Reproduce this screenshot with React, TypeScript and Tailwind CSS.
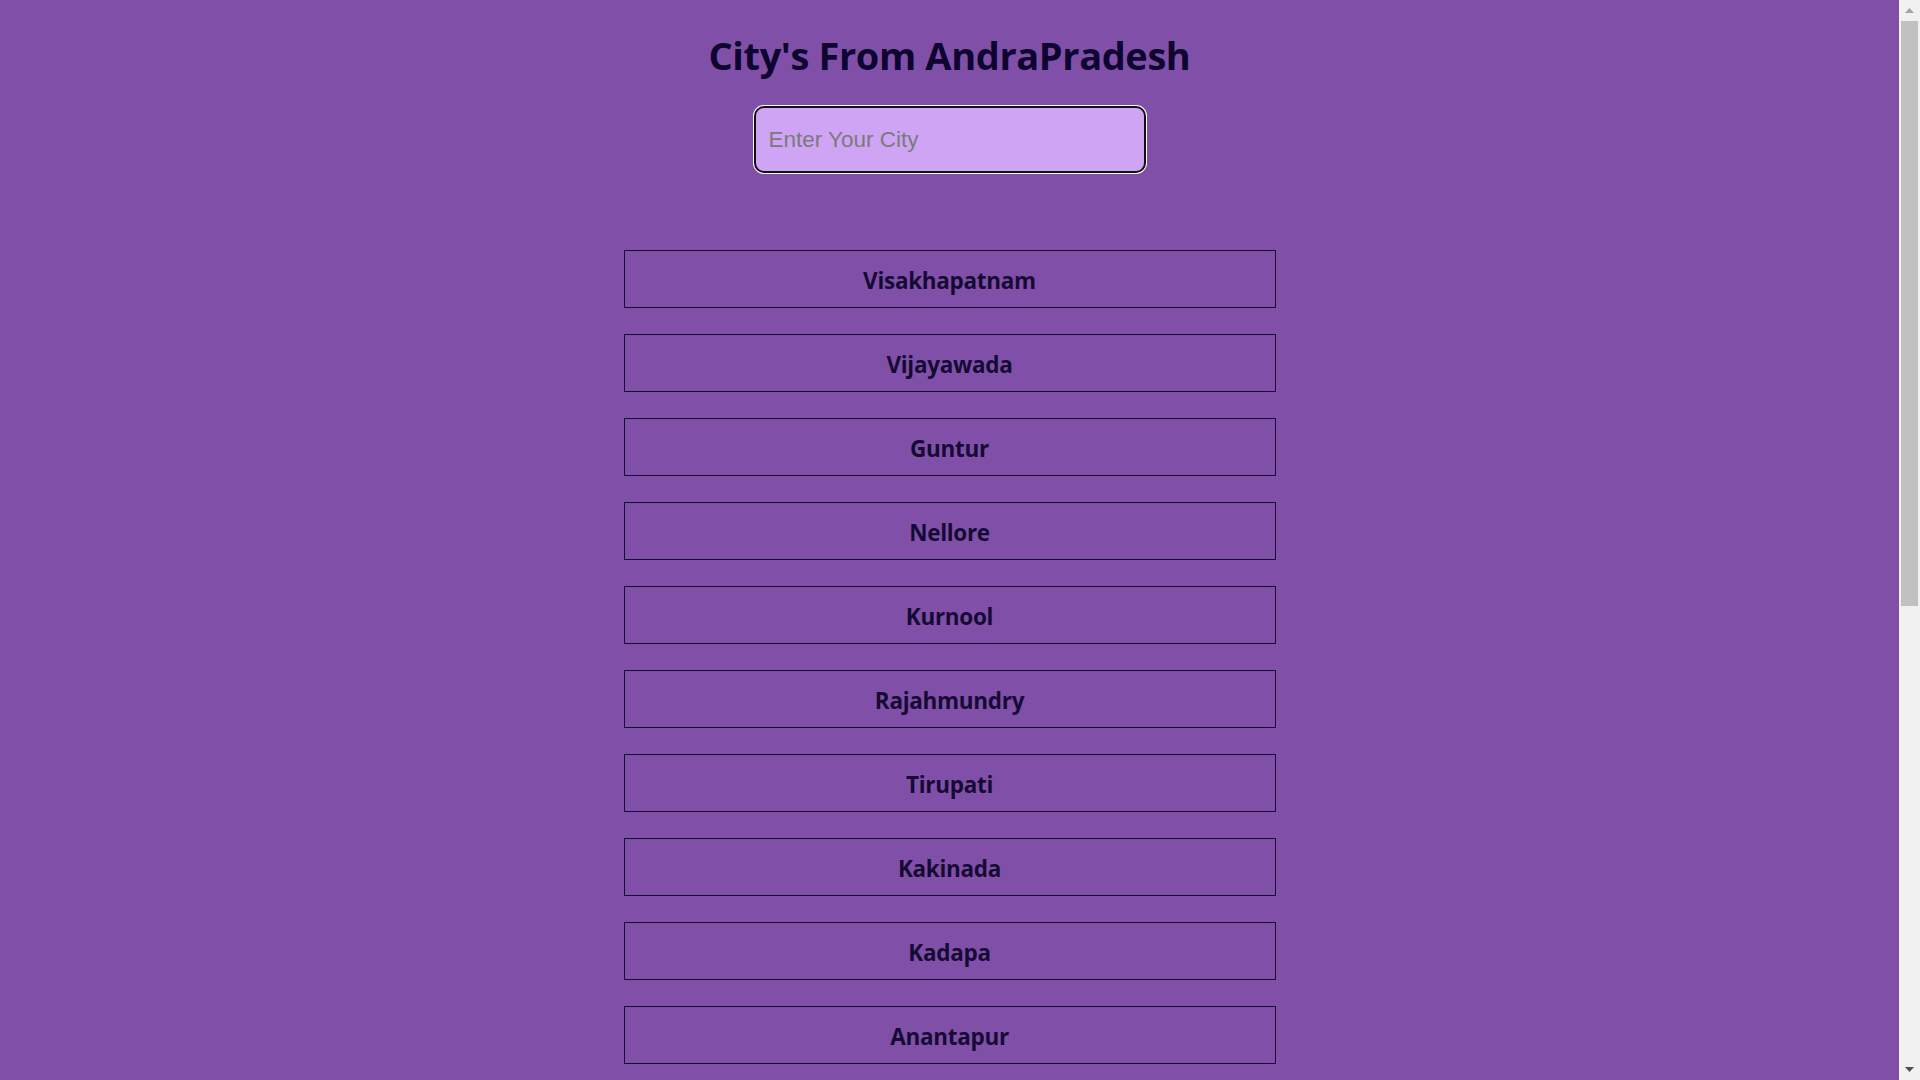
import React from 'react';

const cities: string[] = [
  'Visakhapatnam',
  'Vijayawada',
  'Guntur',
  'Nellore',
  'Kurnool',
  'Rajahmundry',
  'Tirupati',
  'Kakinada',
  'Kadapa',
  'Anantapur',
  'Vizianagaram',
  'Eluru',
  'Ongole',
  'Nandyal',
  'Machilipatnam',
  'Adoni',
  'Tenali',
  'Chittoor',
  'Hindupur',
  'Proddatur',
  'Bhimavaram',
  'Madanapalle',
  'Guntakal',
  'Dharmavaram',
];

const CityCard = ({ name }: { name: string }) => (
  <div className="w-[652px] h-[58px] border border-[#140a33] flex items-center justify-center pt-[3px]">
    <h2 className="text-[22.5px] font-bold text-[#150a33] tracking-[-0.3px]">{name}</h2>
  </div>
);

// browser scrollbar as it shows in the screenshot
const ScrollBar = () => (
  <aside className="sticky top-0 h-screen w-[21px] shrink-0 bg-[#f1f1f1] flex flex-col items-center">
    <div className="h-[21px] w-full flex items-center justify-center">
      <svg width="9" height="5" viewBox="0 0 9 5"><path d="M4.5 0 L9 5 L0 5 Z" fill="#a3a3a3" /></svg>
    </div>
    <div className="w-[17px] h-[585px] bg-[#c1c1c1]" />
    <div className="flex-1" />
    <div className="h-[21px] w-full flex items-center justify-center">
      <svg width="9" height="5" viewBox="0 0 9 5"><path d="M0 0 L9 0 L4.5 5 Z" fill="#505050" /></svg>
    </div>
  </aside>
);

export default function App() {
  const [query, setQuery] = React.useState('');
  const filtered = cities.filter(c => c.toLowerCase().includes(query.toLowerCase()));

  return (
    <div className="min-h-screen bg-[#8050a8] flex items-start">
      <main
        className="flex-1 flex flex-col items-center pb-10"
        style={{ fontFamily: '"Open Sans", "Noto Sans", sans-serif' }}
      >
        <h1 className="mt-[28px] text-[38px] leading-[54px] font-bold text-[#0d0430] tracking-[-0.4px]">
          City's From AndraPradesh
        </h1>

        <input
          autoFocus
          value={query}
          onChange={e => setQuery(e.target.value)}
          placeholder="Enter Your City"
          className="mt-[24px] w-[392px] h-[67px] rounded-[10px] bg-[#d0a4f4] border-2 border-[#111] ring-1 ring-white outline-none px-[13px] text-[22.5px] text-black placeholder:text-[#7a7a7a] caret-[#1a0a40]"
          style={{ fontFamily: '"Liberation Sans", Arial, sans-serif' }}
        />

        <div className="mt-[77px] flex flex-col gap-[26px]">
          {filtered.map(city => (
            <CityCard key={city} name={city} />
          ))}
        </div>
      </main>
      <ScrollBar />
    </div>
  );
}
